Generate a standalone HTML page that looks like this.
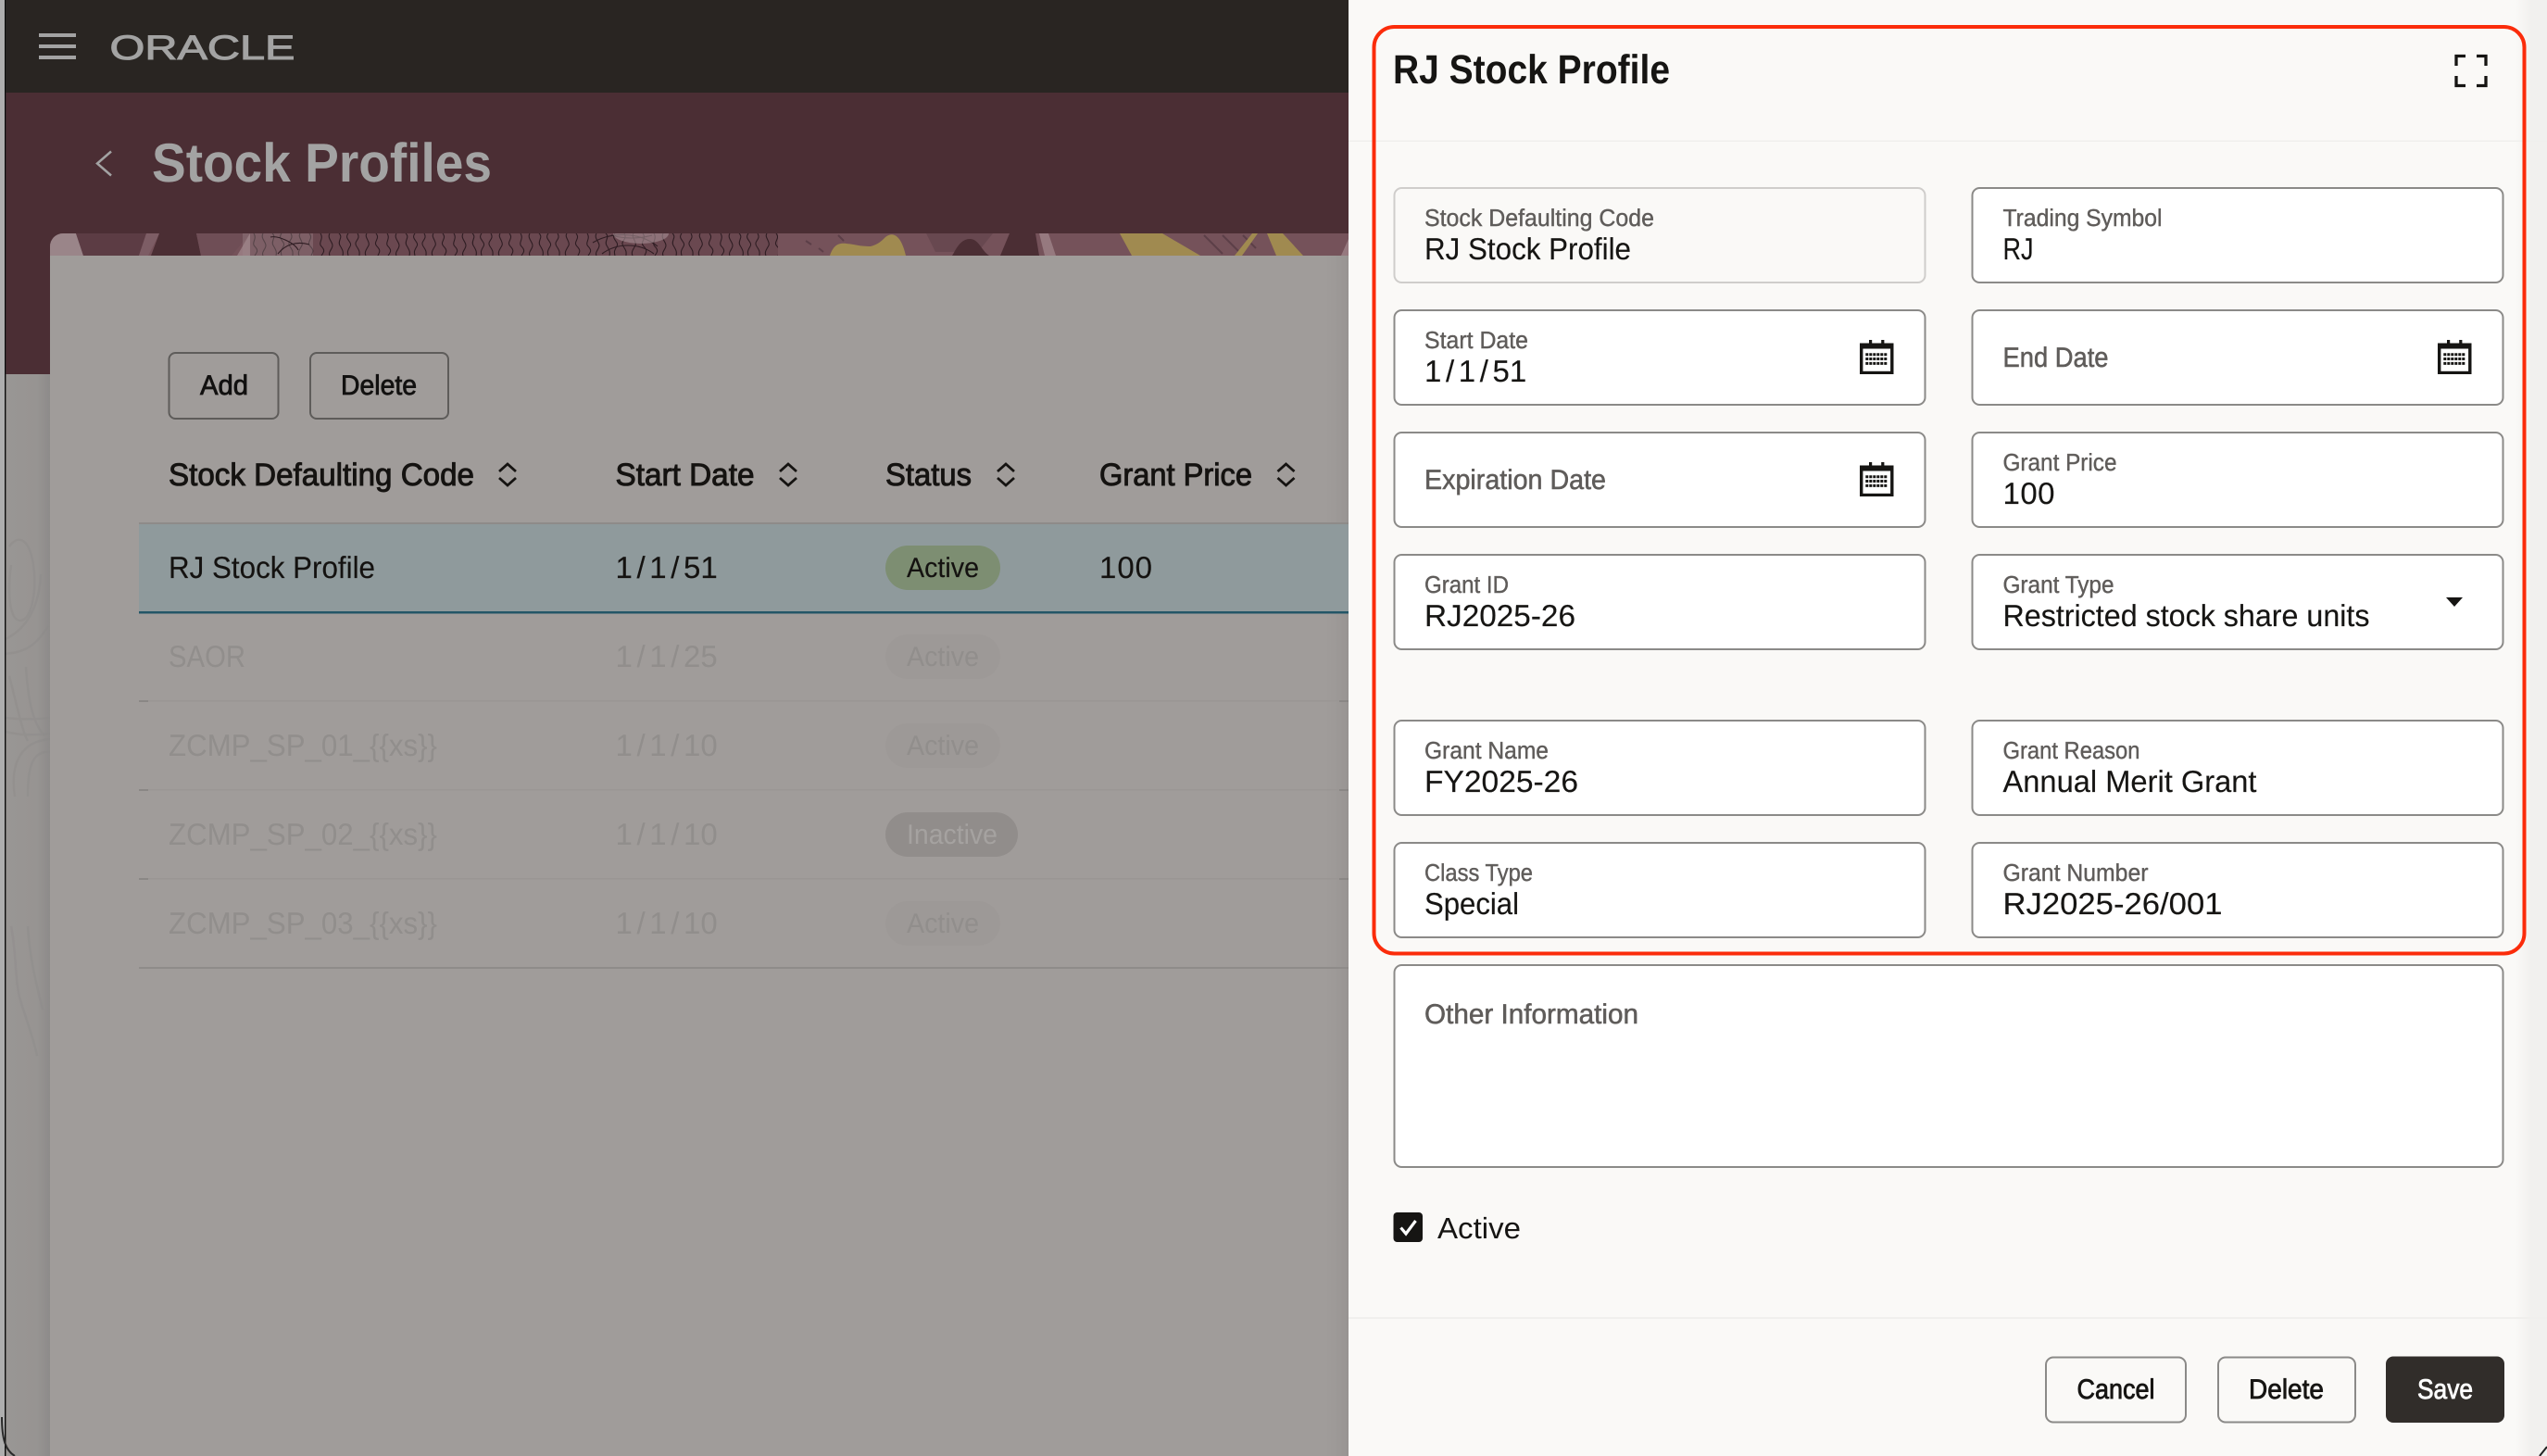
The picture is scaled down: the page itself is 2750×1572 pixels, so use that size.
<!DOCTYPE html>
<html lang="en"><head><meta charset="utf-8"><title>RJ Stock Profile</title>
<style>
html,body{margin:0;padding:0;background:#a09c9a;width:2750px;height:1572px;overflow:hidden}
svg{display:block}
text{font-family:"Liberation Sans",sans-serif;text-rendering:geometricPrecision}
.lab{font-size:26px;fill:#5f5c5a;stroke:#5f5c5a;stroke-width:.4}
.val{font-size:33px;fill:#161513;stroke:#161513;stroke-width:.15}
.ph{font-size:30px;fill:#5f5c5a;stroke:#5f5c5a;stroke-width:.55}
.th{font-size:34px;fill:#151311;stroke:#151311;stroke-width:.95}
.td{font-size:33px;fill:#141210;stroke:#141210;stroke-width:.15}
.dim{font-size:33px;fill:#918e8c}
.btn{font-size:30px;fill:#161513;stroke:#161513;stroke-width:.8}
</style></head><body>
<svg xmlns="http://www.w3.org/2000/svg" width="2750" height="1572" viewBox="0 0 2750 1572">
<defs>
<linearGradient id="lg" x1="0" x2="1" y1="0" y2="0"><stop offset="0" stop-color="#999694"/><stop offset=".7" stop-color="#979492"/><stop offset="1" stop-color="#8d8b8a"/></linearGradient>
<linearGradient id="rg" x1="0" x2="1" y1="0" y2="0"><stop offset="0" stop-color="#a09c9a" stop-opacity="0"/><stop offset="1" stop-color="#918e8c"/></linearGradient>
<linearGradient id="pg" x1="0" x2="1" y1="0" y2="0"><stop offset="0" stop-color="#f1f0ee" stop-opacity="0"/><stop offset=".5" stop-color="#f1f0ee"/><stop offset="1" stop-color="#f1f0ee"/></linearGradient>
<clipPath id="strip"><path d="M54 276V266a14 14 0 0 1 14-14H1456V276Z"/></clipPath>
<pattern id="wood" width="72" height="24" patternUnits="userSpaceOnUse" x="270" y="252">
<rect width="72" height="24" fill="#6a4850"/>
<g fill="none" stroke="#2e1c22" stroke-width="1.100">
<path d="M4 0c4 6-3 10 1 14s3 6 0 10"/><path d="M14 0c-3 5 3 9 3 13s-5 7-3 11"/><path d="M24 0c5 4-2 8 1 13s4 7 3 11"/><path d="M34 0c-5 6 5 9 2 14s-3 6-2 10"/><path d="M44 0c4 7-5 8-1 14s3 6 3 10"/><path d="M54 0c-3 4 4 9 2 13s-5 7-3 11"/><path d="M64 0c5 6-4 9 1 14s2 7 1 10"/>
</g></pattern>
<g id="cal" fill="#161513">
<rect x="0" y="3.500" width="36.500" height="6"/>
<rect x="0" y="3.500" width="3.400" height="33.500"/>
<rect x="33.100" y="3.500" width="3.400" height="33.500"/>
<rect x="0" y="33.800" width="36.500" height="3.200"/>
<rect x="10" y="0" width="3.200" height="8"/>
<rect x="23.200" y="0" width="3.200" height="8"/>
<path d="M6.300 15.700H30.300M6.300 20.500H30.300M6.300 25.400H30.300" stroke="#161513" stroke-width="3" stroke-dasharray="3 1" fill="none"/>
</g>
</defs>

<!-- page base -->
<rect width="1456" height="1572" fill="#a09c9a"/>
<rect x="0" y="0" width="5" height="1572" fill="#aeaeae"/>
<rect x="6" y="404" width="48" height="1168" fill="url(#lg)"/>
<g fill="none" stroke="#8c8a89" stroke-width="2.500" opacity=".4">
<path d="M10 590c10-14 22-8 26 20s-2 60-14 60-14-30-10-60"/>
<path d="M6 690c20-10 36-30 38-70"/>
<path d="M6 706c16-2 30-4 46-30"/>
<path d="M10 730c8 30 14 60 20 70M28 720c2 30 6 60 20 74"/>
<path d="M6 775c16 2 30 2 48 0M6 790c16 4 30 4 48 2"/>
<path d="M16 860c-6-40 10-60 38-62M30 860c0-30 4-50 24-48"/>
<path d="M12 1000c6 30 4 60 10 80s14 40 18 60M30 1000c2 30 6 50 16 90"/>
</g>
<rect x="5" y="0" width="1.400" height="1572" fill="#0b0b0b"/>
<path d="M2 1530c0 24 4 36 14 42" fill="none" stroke="#2a2a2a" stroke-width="2"/>

<!-- top bar -->
<rect x="6.400" y="0" width="1450" height="100" fill="#292522"/>
<rect x="42" y="36" width="40" height="4" fill="#a3a3a3"/>
<rect x="42" y="48" width="40" height="4" fill="#a3a3a3"/>
<rect x="42" y="60" width="40" height="4" fill="#a3a3a3"/>
<text x="118.500" y="64" font-size="37" fill="#a3a3a3" stroke="#a3a3a3" stroke-width="1" textLength="200" lengthAdjust="spacingAndGlyphs">ORACLE</text>

<!-- maroon header -->
<rect x="6.400" y="100" width="1450" height="304" fill="#4b2e34"/>
<path d="M120 163.500L105 176.500 120 189.500" fill="none" stroke="#a3a3a3" stroke-width="2.500"/>
<text x="164" y="196" font-size="59" font-weight="700" fill="#a3a3a3" textLength="367" lengthAdjust="spacingAndGlyphs">Stock Profiles</text>

<!-- pattern strip -->
<g clip-path="url(#strip)">
<rect x="54" y="252" width="1402" height="24" fill="#75525a"/>
<path d="M54 276V252H82L90 276Z" fill="#9a8589"/>
<path d="M82 252H158L150 276H90Z" fill="#5c3c44"/>
<path d="M158 252H172L160 276H150Z" fill="#7d5d65"/>
<path d="M172 252H212L217 276H163Z" fill="#4b2e34"/>
<path d="M212 252H270L250 276H217Z" fill="#6f4e56"/>
<path d="M270 252H285V276H256Z" fill="#96797f"/>
<rect x="270" y="252" width="570" height="24" fill="url(#wood)"/>
<rect x="262" y="252" width="76" height="24" fill="#a08c90" opacity=".35"/>
<path d="M292 256c8-2 26 6 30 14M300 274c8-10 20-14 34-10M640 262c20-12 50-12 70 4M650 274c16-12 40-12 56 0M660 254c14 4 30 4 44 0" fill="none" stroke="#2e1c22" stroke-width="1.100"/>
<ellipse cx="692" cy="252" rx="30" ry="11" fill="#a78f94" opacity=".6"/>
<rect x="840" y="252" width="616" height="24" fill="#75525a"/>
<path d="M870 260l6 4M884 268l5 4M905 254l6 6M1090 258l20 16M1300 254l20 20M1320 254l20 20M1342 254l14 14" stroke="#5c3f48" stroke-width="2"/>
<path d="M896 276c4-12 10-14 18-13 10 1 14 3 26 3 8-2 12-6 16-10 10-8 18 2 22 20Z" fill="#a08a50"/>
<path d="M1000 252H1072L1056 272H1010Z" fill="#65464e" opacity=".8"/>
<path d="M1028 276c3-4 8-18 19-18 10 0 12 12 21 18Z" fill="#4b2e34"/>
<path d="M1090 252H1118L1122 276H1080Z" fill="#4b2e34"/>
<path d="M1122 252H1132L1140 276H1128Z" fill="#96797f"/>
<path d="M1209 252H1255L1296 276H1222Z" fill="#a08a50"/>
<path d="M1352 252H1358L1341 276H1333Z" fill="#a08a50"/>
<path d="M1368 252H1385L1407 276H1378Z" fill="#a08a50"/>
<path d="M1456 252V276H1448L1456 258Z" fill="#96797f"/>
</g>

<!-- card -->
<rect x="54" y="276" width="1402" height="1296" fill="#a09c9a"/>
<rect x="1424" y="276" width="32" height="1296" fill="url(#rg)" opacity=".6"/>

<!-- toolbar -->
<rect x="182.500" y="381" width="118" height="71" rx="7" fill="none" stroke="#5e5c5a" stroke-width="2"/>
<rect x="335" y="381" width="149" height="71" rx="7" fill="none" stroke="#5e5c5a" stroke-width="2"/>
<text x="216" y="426" class="btn" textLength="52" lengthAdjust="spacingAndGlyphs" style="fill:#121110;stroke:#121110">Add</text>
<text x="368" y="426" class="btn" textLength="82" lengthAdjust="spacingAndGlyphs" style="fill:#121110;stroke:#121110">Delete</text>

<!-- table head -->
<text x="182" y="524" class="th" textLength="330" lengthAdjust="spacingAndGlyphs">Stock Defaulting Code</text>
<text x="664.500" y="524" class="th" textLength="150" lengthAdjust="spacingAndGlyphs">Start Date</text>
<text x="956" y="524" class="th" textLength="93" lengthAdjust="spacingAndGlyphs">Status</text>
<text x="1187" y="524" class="th" textLength="165" lengthAdjust="spacingAndGlyphs">Grant Price</text>
<g fill="none" stroke="#151311" stroke-width="2.800">
<path d="M539 509l9-8 9 8M539 516l9 8 9-8"/>
<path d="M842 509l9-8 9 8M842 516l9 8 9-8"/>
<path d="M1077 509l9-8 9 8M1077 516l9 8 9-8"/>
<path d="M1379.500 509l9-8 9 8M1379.500 516l9 8 9-8"/>
</g>

<!-- table rows -->
<rect x="150" y="564" width="1306" height="2" fill="#8e8b89"/>
<rect x="150" y="566" width="1306" height="94" fill="#8f9a9c"/>
<rect x="150" y="660" width="1306" height="2.500" fill="#235667"/>
<text x="182" y="624" class="td" textLength="223" lengthAdjust="spacingAndGlyphs">RJ Stock Profile</text>
<text x="664.500" y="624" class="td" dx="0 4.600 4.600 4.600 4.600 0">1/1/51</text>
<rect x="956" y="589" width="124" height="48" rx="24" fill="#7d8e72"/>
<text x="979" y="623" class="td" style="font-size:30px" textLength="78" lengthAdjust="spacingAndGlyphs">Active</text>
<text x="1187" y="624" class="td" textLength="57" lengthAdjust="spacing">100</text>

<g fill="#9a9694">
<rect x="150" y="756" width="1306" height="1.500"/><rect x="150" y="852" width="1306" height="1.500"/><rect x="150" y="948" width="1306" height="1.500"/>
</g>
<g fill="#8a8785">
<rect x="150" y="756" width="10" height="2"/><rect x="150" y="852" width="10" height="2"/><rect x="150" y="948" width="10" height="2"/>
<rect x="1446" y="756" width="10" height="2"/><rect x="1446" y="852" width="10" height="2"/><rect x="1446" y="948" width="10" height="2"/>
</g>
<rect x="150" y="1044" width="1306" height="2" fill="#8e8b89"/>

<text x="182" y="720" class="dim" textLength="83" lengthAdjust="spacingAndGlyphs">SAOR</text>
<text x="664.500" y="720" class="dim" dx="0 4.600 4.600 4.600 4.600 0">1/1/25</text>
<rect x="956" y="685" width="124" height="48" rx="24" fill="#9d9997"/>
<text x="979" y="719" class="dim" style="font-size:30px" textLength="78" lengthAdjust="spacingAndGlyphs">Active</text>

<text x="182" y="816" class="dim" textLength="290" lengthAdjust="spacingAndGlyphs">ZCMP_SP_01_{{xs}}</text>
<text x="664.500" y="816" class="dim" dx="0 4.600 4.600 4.600 4.600 0">1/1/10</text>
<rect x="956" y="781" width="124" height="48" rx="24" fill="#9d9997"/>
<text x="979" y="815" class="dim" style="font-size:30px" textLength="78" lengthAdjust="spacingAndGlyphs">Active</text>

<text x="182" y="912" class="dim" textLength="290" lengthAdjust="spacingAndGlyphs">ZCMP_SP_02_{{xs}}</text>
<text x="664.500" y="912" class="dim" dx="0 4.600 4.600 4.600 4.600 0">1/1/10</text>
<rect x="956" y="877" width="143" height="48" rx="24" fill="#918d8b"/>
<text x="979" y="911" class="dim" style="font-size:30px;fill:#a5a2a0" textLength="98" lengthAdjust="spacingAndGlyphs">Inactive</text>

<text x="182" y="1008" class="dim" textLength="290" lengthAdjust="spacingAndGlyphs">ZCMP_SP_03_{{xs}}</text>
<text x="664.500" y="1008" class="dim" dx="0 4.600 4.600 4.600 4.600 0">1/1/10</text>
<rect x="956" y="973" width="124" height="48" rx="24" fill="#9d9997"/>
<text x="979" y="1007" class="dim" style="font-size:30px" textLength="78" lengthAdjust="spacingAndGlyphs">Active</text>

<!-- right panel -->
<rect x="1456" y="0" width="1294" height="1572" fill="#faf9f7"/>
<rect x="2716" y="0" width="34" height="1572" fill="url(#pg)"/>
<rect x="1456" y="151.500" width="1294" height="1.500" fill="#f0efed"/>
<rect x="1456" y="1422" width="1294" height="2" fill="#f0efed"/>

<text x="1504" y="90" font-size="44" font-weight="700" fill="#161513" textLength="299" lengthAdjust="spacingAndGlyphs">RJ Stock Profile</text>
<path d="M2652 71V60.500H2662M2674 60.500H2684V71M2652 82V92.500H2662M2674 92.500H2684V82" fill="none" stroke="#161513" stroke-width="3.300"/>

<!-- fields -->
<g stroke="#8b8a88" stroke-width="2" fill="#fff">
<rect x="1505.500" y="203" width="573" height="102" rx="8" fill="#faf9f7" stroke="#cfcdcb"/>
<rect x="2129.500" y="203" width="573" height="102" rx="8"/>
<rect x="1505.500" y="335" width="573" height="102" rx="8"/>
<rect x="2129.500" y="335" width="573" height="102" rx="8"/>
<rect x="1505.500" y="467" width="573" height="102" rx="8"/>
<rect x="2129.500" y="467" width="573" height="102" rx="8"/>
<rect x="1505.500" y="599" width="573" height="102" rx="8"/>
<rect x="2129.500" y="599" width="573" height="102" rx="8"/>
<rect x="1505.500" y="778" width="573" height="102" rx="8"/>
<rect x="2129.500" y="778" width="573" height="102" rx="8"/>
<rect x="1505.500" y="910" width="573" height="102" rx="8"/>
<rect x="2129.500" y="910" width="573" height="102" rx="8"/>
<rect x="1505.500" y="1042" width="1197" height="218" rx="8"/>
</g>

<text x="1538" y="244" class="lab" textLength="248" lengthAdjust="spacingAndGlyphs">Stock Defaulting Code</text>
<text x="1538" y="280" class="val" textLength="223" lengthAdjust="spacingAndGlyphs">RJ Stock Profile</text>
<text x="2162.500" y="244" class="lab" textLength="172" lengthAdjust="spacingAndGlyphs">Trading Symbol</text>
<text x="2162.500" y="280" class="val" textLength="33" lengthAdjust="spacingAndGlyphs">RJ</text>

<text x="1538" y="376" class="lab" textLength="112" lengthAdjust="spacingAndGlyphs">Start Date</text>
<text x="1538" y="412" class="val" dx="0 4.600 4.600 4.600 4.600 0">1/1/51</text>
<text x="2162.500" y="396" class="ph" textLength="114" lengthAdjust="spacingAndGlyphs">End Date</text>

<text x="1538" y="528" class="ph" textLength="196" lengthAdjust="spacingAndGlyphs">Expiration Date</text>
<text x="2162.500" y="508" class="lab" textLength="123" lengthAdjust="spacingAndGlyphs">Grant Price</text>
<text x="2162.500" y="544" class="val" textLength="56" lengthAdjust="spacing">100</text>

<text x="1538" y="640" class="lab" textLength="91" lengthAdjust="spacingAndGlyphs">Grant ID</text>
<text x="1538" y="676" class="val" textLength="163" lengthAdjust="spacingAndGlyphs">RJ2025-26</text>
<text x="2162.500" y="640" class="lab" textLength="120" lengthAdjust="spacingAndGlyphs">Grant Type</text>
<text x="2162.500" y="676" class="val" textLength="396" lengthAdjust="spacingAndGlyphs">Restricted stock share units</text>

<text x="1538" y="819" class="lab" textLength="134" lengthAdjust="spacingAndGlyphs">Grant Name</text>
<text x="1538" y="855" class="val" textLength="166" lengthAdjust="spacingAndGlyphs">FY2025-26</text>
<text x="2162.500" y="819" class="lab" textLength="148" lengthAdjust="spacingAndGlyphs">Grant Reason</text>
<text x="2162.500" y="855" class="val" textLength="274" lengthAdjust="spacingAndGlyphs">Annual Merit Grant</text>

<text x="1538" y="951" class="lab" textLength="117" lengthAdjust="spacingAndGlyphs">Class Type</text>
<text x="1538" y="987" class="val" textLength="102" lengthAdjust="spacingAndGlyphs">Special</text>
<text x="2162.500" y="951" class="lab" textLength="157" lengthAdjust="spacingAndGlyphs">Grant Number</text>
<text x="2162.500" y="987" class="val" textLength="237" lengthAdjust="spacingAndGlyphs">RJ2025-26/001</text>

<text x="1538" y="1105" class="ph" textLength="231" lengthAdjust="spacingAndGlyphs">Other Information</text>

<use href="#cal" x="2008" y="367"/>
<use href="#cal" x="2632" y="367"/>
<use href="#cal" x="2008" y="499"/>
<path d="M2641 645H2659L2650 655Z" fill="#161513"/>

<!-- checkbox -->
<rect x="1504.500" y="1309" width="31.500" height="32" rx="4" fill="#161513"/>
<path d="M1512.500 1325.500L1518 1332 1528.500 1318" fill="none" stroke="#fff" stroke-width="3.200"/>
<text x="1552" y="1337" font-size="32" fill="#161513" textLength="90" lengthAdjust="spacingAndGlyphs">Active</text>

<!-- footer -->
<rect x="2209" y="1465.500" width="151" height="70" rx="8" fill="#faf9f7" stroke="#8b8a88" stroke-width="2"/>
<rect x="2395" y="1465.500" width="148" height="70" rx="8" fill="#faf9f7" stroke="#8b8a88" stroke-width="2"/>
<rect x="2576" y="1464.500" width="128" height="71.500" rx="8" fill="#312d2a"/>
<text x="2242.500" y="1510" class="btn" textLength="84" lengthAdjust="spacingAndGlyphs">Cancel</text>
<text x="2428" y="1510" class="btn" textLength="81" lengthAdjust="spacingAndGlyphs">Delete</text>
<text x="2610" y="1510" class="btn" style="fill:#fff;stroke:#fff" textLength="60" lengthAdjust="spacingAndGlyphs">Save</text>

<!-- red annotation -->
<rect x="1483.500" y="29" width="1242" height="1000.500" rx="22" fill="none" stroke="#fb2c0b" stroke-width="4"/>
<path d="M2742 1572l8-10" stroke="#222" stroke-width="2" fill="none"/>
</svg>
</body></html>
